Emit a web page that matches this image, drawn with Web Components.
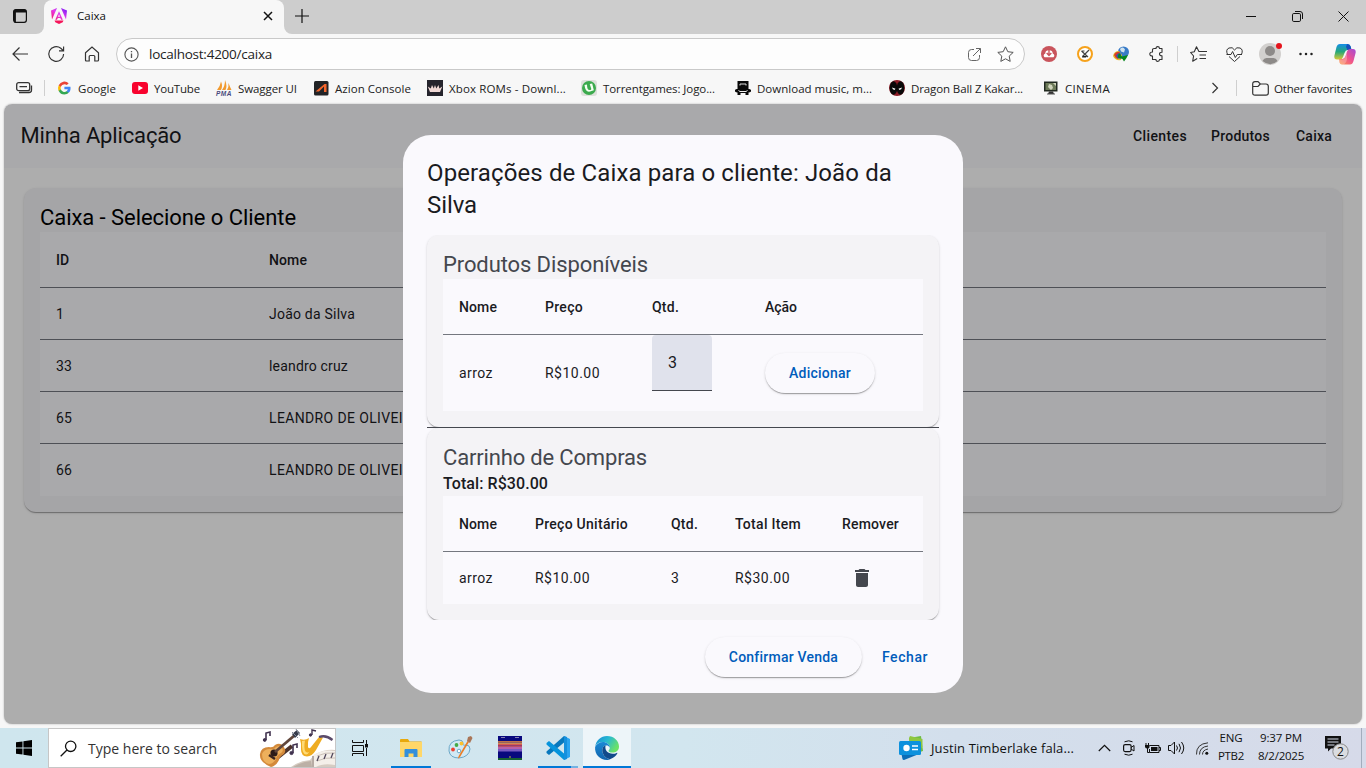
<!DOCTYPE html>
<html lang="pt-BR">
<head>
<meta charset="utf-8">
<title>Caixa</title>
<style>
html,body{margin:0;height:100%;overflow:hidden;background:#f7f7f7}
body{display:flex;flex-direction:column;font-family:"Open Sans","Noto Sans",sans-serif}
</style>
</head>
<body>
<tab-strip></tab-strip>
<address-bar></address-bar>
<favorites-bar></favorites-bar>
<app-page></app-page>
<task-bar></task-bar>
<script>
const ICONS = {
  workspaces:[16,16,`<rect x="1.600" y="1.600" width="12.800" height="12.800" rx="2.300" fill="none" stroke="#111" stroke-width="1.200"/><path d="M1.500 4.600V3.500q0-2 2-2h9q2 0 2 2v1.100zM2 4.600h1.900V14H2z" fill="#111"/>`],
  angular:[16,16,`<defs><linearGradient id="a" x1="0" y1="1" x2="1" y2="0"><stop offset="0" stop-color="#f6125f"/><stop offset=".5" stop-color="#e53cf0"/><stop offset="1" stop-color="#6a18f5"/></linearGradient></defs><path d="M6 0 0 2.500l1 9zM10 0l6 2.500-1 9zM8 3.300 4.300 11.700H6l.8-1.700h2.500l.8 1.700h1.700zM8 6.300l1 2.400H7z" fill="url(#a)" fill-rule="evenodd"/><path d="M3.500 12.600h9l-.8 1.600L8 16l-3.700-1.800z" fill="#f5155a"/>`],
  x:[10,10,`<path d="M1 1l8 8M9 1 1 9" stroke="#111" stroke-width="1.500"/>`],
  plus:[14,14,`<path d="M7 0v14M0 7h14" stroke="#111" stroke-width="1.200"/>`],
  min:[10,10,`<path d="M0 5.500h10" stroke="#111"/>`],
  restore:[11,11,`<rect x=".5" y="2.500" width="8" height="8" rx="1.300" fill="none" stroke="#111"/><path d="M3 .5h5q2.500 0 2.500 2.500v5" fill="none" stroke="#111"/>`],
  close:[11,11,`<path d="M.5.5l10 10M10.500.5l-10 10" stroke="#111"/>`],
  back:[16,14,`<path d="M16 7H1M7.500.5 1 7l6.500 6.500" fill="none" stroke="#333" stroke-width="1.200"/>`],
  reload:[17,16,`<path d="M15.600 8A7.400 7.300 0 1 1 12.800 2.300L15.500 4.700M15.600.5v4.400h-4.600" fill="none" stroke="#333" stroke-width="1.150"/>`],
  home:[16,16,`<path d="M1.500 6.800 8 1l6.500 5.800V14q0 1-1 1h-2.700V10.500q0-1-1-1H6.200q-1 0-1 1V15H2.500q-1 0-1-1z" fill="none" stroke="#333" stroke-width="1.200"/>`],
  info:[15,15,`<circle cx="7.500" cy="7.500" r="6.600" fill="none" stroke="#555" stroke-width="1.100"/><path d="M7.500 6.500V11M7.500 4v1.200" stroke="#555" stroke-width="1.300"/>`],
  open:[13,13,`<path d="M6 1.500H3.500q-3 0-3 3v5q0 3 3 3h5q3 0 3-3V7M8 .5h4.500V5M12.300.7 5 8" fill="none" stroke="#666"/>`],
  star:[17,16,`<path d="M8.500.8l2.300 4.900 5.400.7-4 3.700 1 5.300-4.700-2.600-4.700 2.600 1-5.300-4-3.700 5.400-.7z" fill="none" stroke="#555" stroke-linejoin="round"/>`],
  dl:[16,16,`<circle cx="8" cy="8" r="8" fill="#c9545c"/><path d="M3.500 11.300q-2-2 .8-3.700 0-3.300 3.700-3.300t3.700 3.300q2.800 1.700.8 3.700z" fill="#fff"/><path d="M8 3v6M5.700 7 8 9.500 10.300 7" fill="none" stroke="#c9545c" stroke-width="1.400"/>`],
  clock:[16,16,`<circle cx="8" cy="8" r="7" fill="#fff" stroke="#f6a21c" stroke-width="2"/><path d="M4.500 5h3M4.500 5l6.500 6M12 4 5.500 10.500" fill="none" stroke="#444" stroke-width="1.200"/><path d="M5.500 10h4.500l-1 1.500H5z" fill="#222"/>`],
  idm:[17,16,`<circle cx="10.500" cy="6" r="5.500" fill="#397bc7"/><path d="M7 3q3-3 5 .5l-1 3-3-1z" fill="#cfe2ee"/><path d="M0 10q1-5 6-5l3 4-1 5q-6 1-8-4z" fill="#e2bc2c"/><path d="M1 9q2-4 6-3l-2 7q-3-1-4-4z" fill="#d83a2c"/><path d="M3 9.500q2-3 5-2v5H5z" fill="#2b57b5"/><path d="M6 7l3 3.500 6-1.500-1.500 3-2.500 3.500-1.500-2.500-5-1.500z" fill="#07861c"/>`],
  puzzle:[16,16,`<path d="M5 2.500h2Q7 .6 8.700.6t1.800 1.900H13v3.700q-2.500 0-2.500 1.800T13 9.800v3.700h-2.500q0 1.900-1.800 1.900T7 13.500H3.500V10Q.8 10 .8 8t2.700-2V3.500q0-1 1.500-1z" fill="none" stroke="#333" stroke-width="1.100" stroke-linejoin="round"/>`],
  favs:[17,16,`<path d="M9 5.700 6.500.8 4.300 5.700.6 6.500l3 3.500-.9 5.200 4.500-2.600" fill="none" stroke="#333" stroke-width="1.100" stroke-linejoin="round"/><path d="M9 5.500h8M9.500 9H16M9.500 12.500H16" stroke="#333" stroke-width="1.100"/>`],
  heart:[17,15,`<path d="M1.500 7.500Q-.6 2.500 3 1t5.500 2Q10.500-.4 14 1t1.500 6.500M3 9.500l5.500 5 5.500-5M.5 7.500H5l1.600-3 2.700 6 2-3H16" fill="none" stroke="#333"/>`],
  avatar:[24,24,`<circle cx="11" cy="12" r="11" fill="#d2d0ce"/><circle cx="11" cy="9" r="5" fill="#8d8a88"/><path d="M3.500 19q1.500-3 4-3h7q2.500 0 4 3-7 6.500-15 0z" fill="#8d8a88"/><circle cx="20" cy="4" r="3" fill="#e5141c"/>`],
  dots:[14,4,`<g fill="#222"><circle cx="1.500" cy="2" r="1.250"/><circle cx="7" cy="2" r="1.250"/><circle cx="12.500" cy="2" r="1.250"/></g>`],
  copilot:[22,21,`<defs><linearGradient id="b" x2="0" y2="1"><stop stop-color="#168ee8"/><stop offset=".5" stop-color="#25a879"/><stop offset="1" stop-color="#d9c934"/></linearGradient><linearGradient id="c" x1="1" x2="0" y2="1"><stop stop-color="#a34bd6"/><stop offset=".5" stop-color="#f0538e"/><stop offset="1" stop-color="#fb9a48"/></linearGradient></defs><path d="M6 0h8q2 0 2.700 2.500L17.500 6h-4Q11.500 6 10.500 9L9 13q-.8 2.500-3 2.500H3Q0 15.500.3 12L2.500 3Q3.400 0 6 0z" fill="url(#b)"/><path d="M13 0q3 0 3.600 2.500L17.500 6h-4L12 3z" fill="#1650bd"/><path d="M16 20.500H8q-2 0-2.500-2L5 15h3.500q2 0 3-3L13 7.500Q13.800 5 16 5h3q3 0 2.700 3.500l-2.200 8.500q-1 3.500-3.500 3.500z" fill="url(#c)"/><path d="M8.500 15.500q2 0 3-3L13 8v7.500q0 2-3 5H8q-2 0-2.500-2L5 15.500z" fill="#fff" opacity=".25"/>`],
  feed:[17,12,`<rect x=".7" y=".7" width="13" height="8" rx="2" fill="none" stroke="#333" stroke-width="1.300"/><path d="M3.500 4.700h7.500M15.500 3.500V8q0 2.500-2.500 2.500H3" fill="none" stroke="#333" stroke-width="1.300"/>`],
  google:[16,16,`<g transform="scale(.8) translate(2.500 2)"><path d="M15.680 8.180c0-.57-.05-1.110-.15-1.640H8v3.100h4.300a3.680 3.680 0 0 1-1.600 2.410v2h2.590c1.510-1.390 2.390-3.440 2.390-5.870z" fill="#4285f4"/><path d="M8 16c2.160 0 3.970-.72 5.290-1.940l-2.590-2a4.800 4.800 0 0 1-7.150-2.520H.88v2.070A8 8 0 0 0 8 16z" fill="#34a853"/><path d="M3.550 9.540a4.800 4.800 0 0 1 0-3.060V4.410H.88a8 8 0 0 0 0 7.200z" fill="#fbbc05"/><path d="M8 3.180c1.170 0 2.230.4 3.060 1.200l2.300-2.300A8 8 0 0 0 .88 4.410l2.670 2.070A4.770 4.770 0 0 1 8 3.180z" fill="#ea4335"/></g>`],
  youtube:[16,16,`<rect x="0" y="2" width="16" height="12" rx="3" fill="#f8032e"/><path d="M6.300 5.300v5.400L11 8z" fill="#fff"/>`],
  pma:[16,16,`<path d="M5 1.500Q7 6 5 10H1Q4 7 5 1.500zM9 0q2.500 6 .5 10H6q3-4 3-10zM12.500 3Q14 7 15.500 10H11q2-3 1.500-7z" fill="#f29a2e"/><text x="0" y="16" font-family="Liberation Sans" font-style="italic" font-weight="bold" font-size="6.500" textLength="15.500" fill="#4a4b7d">PMA</text>`],
  azion:[16,16,`<rect x="1" y="1" width="14.500" height="14.500" rx="1.500" fill="#222326"/><path d="M2.500 11.500 11.500 4H13.500v8H11V6.500l-5 5z" fill="#f3652b"/>`],
  xbox:[16,16,`<path d="M0 0h16v16H0z" fill="#25242c"/><path d="M3 12 .8 6.500l3 2L5 5l1.800 3.500L8 5l1.300 3.500L11.500 5l.8 3.500 3-2L13 12z" fill="#f0d8d5"/>`],
  torrent:[16,16,`<rect width="16" height="16" rx="3" fill="#dde0db"/><circle cx="8" cy="8" r="7" fill="#3baa4d"/><path d="M3.500 5 6 4.500Q6 10 8.500 10T10 8L8.700 4l2.500-.5 1.600 6.800-2.300.7Q4.500 14 3.500 5z" fill="#f5fff2"/>`],
  music:[16,16,`<path d="M2.500 1h11v8h-11zM0 10q1-1.500 3-1h10q2-.5 3 1v1.500q-1 1-2.500 1V15h-3v-2h-5v2h-3v-2.500Q1 12.500 0 11.500z" fill="#080808"/><path d="M5 5.500V4h6v1.500" fill="none" stroke="#ddd"/><path d="M3.500 10.500l1.500 1h6l1.500-1" fill="none" stroke="#eee"/>`],
  dead:[16,16,`<circle cx="8" cy="8" r="8" fill="#8c1c26"/><ellipse cx="4.500" cy="8" rx="3.800" ry="6.700" fill="#090909"/><ellipse cx="11.500" cy="8" rx="3.800" ry="6.700" fill="#090909"/><path d="M3 7.500l3.500 1.200-1 1.200Q3.500 9.800 3 7.500zM13 7.500 9.500 8.700l1 1.200q2-.1 2.500-2.400z" fill="#fff"/>`],
  cinema:[16,16,`<path d="M1 1.500h13.500v10H1z" fill="#222a21"/><path d="M2.500 3h10.500v7H2.500z" fill="#6c7a58"/><path d="M6 4l3 1 1 3-2 2-3-3zM10 3h3v3z" fill="#cfd3bb"/><path d="M6 11.500h4l1 2.500H5z" fill="#333"/><path d="M4 14h8" stroke="#555"/>`],
  chev:[8,12,`<path d="M1.500 1 6.500 6l-5 5" fill="none" stroke="#333" stroke-width="1.200"/>`],
  folder:[17,15,`<path d="M.7 4V3q0-2.300 2.300-2.300h3L8.300 3H14q2.300 0 2.300 2.300V12q0 2.200-2.300 2.200H3Q.7 14.200.7 12zM.7 5.500H6L8.300 3" fill="none" stroke="#333" stroke-width="1.200"/>`],
  trash:[24,24,`<path d="M6 19c0 1.100.9 2 2 2h8c1.100 0 2-.9 2-2V7H6v12zM19 4h-3.500l-1-1h-5l-1 1H5v2h14V4z" fill="#44474e"/>`],
  win:[16,16,`<path d="M0 2.300 6.500 1.400V7.500H0zM7.400 1.300 16 0v7.500H7.400zM0 8.500h6.500v6.100L0 13.700zM7.400 8.500H16V16l-8.600-1.300z" fill="#000"/>`],
  lens:[17,17,`<circle cx="10.700" cy="6.300" r="5.200" fill="none" stroke="#111" stroke-width="1.300"/><path d="M7 10 .7 16.300" stroke="#111" stroke-width="1.300"/>`],
  taskview:[17,16,`<path d="M.5 0v2.500h11V0M.5 16v-2.500h11V16M.5 5.500h11v6H.5zM14.500 0v4M14.500 8v8" fill="none" stroke="#111"/><path d="M13 4h3v3.500h-3z" fill="#111"/>`],
  explorer:[22,19,`<path d="M0 1q0-1 1-1h7l1.500 2.500H21q1 0 1 1V18H0z" fill="#e8a90c"/><path d="M0 3h22v15H0z" fill="#ffd768"/><path d="M4.500 18V11q0-1 1-1h11q1 0 1 1v7h-4v-3.500h-5V18z" fill="#3490dc"/>`],
  paint:[25,24,`<path d="M11 4Q0 5 1 15q1 7 10 7 10-1 11-9 0-4-4-4-4 1-3-2 0-3-4-3z" fill="#d1e9f4" stroke="#6ca8c8"/><circle cx="5" cy="13.500" r="1.900" fill="#ee4030"/><circle cx="8.500" cy="9" r="1.900" fill="#44aa49"/><circle cx="13.500" cy="7.500" r="1.900" fill="#fbc02d"/><circle cx="11" cy="15" r="1.800" fill="#fff" stroke="#6ca8c8"/><path d="M21 6 12 21q-1.500 2-2 1l.7-2L19.500 5z" fill="#ea7e27"/><path d="M19 5l1-4 3-1 1.500 2L22 7z" fill="#aa7657"/>`],
  atari:[24,24,`<path d="M0 0h24v24H0z" fill="#08087d"/><path d="M3 1.500h4M17 1.500h4" stroke="#8780b2"/><path d="M0 5h24v1.500H0z" fill="#c07046"/><path d="M0 6.500h24V8H0z" fill="#c98a5a"/><path d="M0 8h24v1.500H0z" fill="#d95950"/><path d="M0 9.500h24V11H0z" fill="#bd4d69"/><path d="M0 11h24v2H0z" fill="#b761aa"/><path d="M0 13h24v2.500H0z" fill="#785ac0"/><path d="M0 22h24v2H0z" fill="#175f32"/><path d="M12 20v2" stroke="#c0b040"/>`],
  vscode:[24,24,`<path d="M18 0l6 3v18l-6 3z" fill="#2aa4f0"/><path d="M18 0v6.500L3 19l-2.500-2v-1.500z" fill="#0878bd"/><path d="M18 24v-6.500L3 5 .5 7v1.500z" fill="#0794dc"/><path d="M18 0v24l3-1V1z" fill="#1690dd"/>`],
  edge:[24,24,`<defs><linearGradient id="d" x2="1" y2=".5"><stop stop-color="#1686d5"/><stop offset=".5" stop-color="#27b9d2"/><stop offset="1" stop-color="#6be267"/></linearGradient><linearGradient id="e" x2="0" y2="1"><stop stop-color="#1b89d5"/><stop offset="1" stop-color="#1264ad"/></linearGradient></defs><path d="M.2 11C1 4 6 0 12 0c7 0 12 5 12 10.500 0 4-3 6-6.500 6-3 0-4-1-4-1.800 0-.7 1.300-1 1.300-3C14.800 8.500 11.500 6 8 6 4 6 1 8 .2 11z" fill="url(#d)"/><path d="M.1 11C1.300 8 4.500 6 8 6c3.500 0 6.800 2.500 6.800 5.700-1-2-2.500-2.500-4-2.200C7.500 10 6.500 14 8 17.500c1 3 4 5.500 7.500 5.500-1 .6-2.500 1-3.500 1C5 24-.5 18.500.1 11z" fill="url(#e)"/><path d="M10.800 9.500C7.500 10 6.500 14 8 17.500c1 3 4 5.500 7.500 5.500 3-1 5.500-3 6.800-5.500.3-.6-.2-.8-.6-.6-3.500 1.600-8 .8-10-1.700-1.500-2-1.700-4.500-.9-5.700z" fill="#114a8b"/>`],
  news:[24,24,`<path d="M10 2 22 0l2 15-12 4z" fill="#6cbd45"/><path d="M10 2 11 0l12.500 3v8L12 19z" fill="#8fc740"/><path d="M2 16l18 2-15 6q-1.500 0-1.500-1z" fill="#0c6db7"/><rect x="0" y="5" width="22" height="14" rx="1.500" fill="#0d91dd"/><circle cx="7.500" cy="12" r="3.200" fill="#fff"/><path d="M13 10H19M13 13.500H19" stroke="#fff" stroke-width="1.600"/>`],
  up:[13,8,`<path d="M.8 7 6.500 1.300 12.200 7" fill="none" stroke="#111" stroke-width="1.200"/>`],
  cam:[12,16,`<path d="M1.500 1.800q4.500-2 8 0M1.500 14.200q4.500 2 8 0" fill="none" stroke="#111"/><rect x=".6" y="4.600" width="7.500" height="7" rx="1.500" fill="none" stroke="#111" stroke-width="1.200"/><path d="M8 7.500 11 5.500v5.500L8 9" fill="none" stroke="#111"/>`],
  bat:[16,13,`<path d="M4.500 3.500h9.500V10.500H4.500V7M14 5.500H15.500V8.500h-1.500" fill="none" stroke="#111"/><path d="M6 5h6.500v4H6zM0 3h4.500v2q0 1.500-2 1.500T0 5z" fill="#111"/><path d="M1 1v2M3.500 1v2M2.500 6v4.500h2" fill="none" stroke="#111"/>`],
  vol:[17,14,`<path d="M.5 4.500H3L6.500 1v12L3 9.500H.5z" fill="none" stroke="#111"/><path d="M8.500 4.500q2 2.500 0 5M11 2.800q3 4.200 0 8.400M13.500 1q4.500 6 0 12" fill="none" stroke="#111"/>`],
  wifi:[13,13,`<path d="M.5 12.500Q0 2 12 .8M3.500 12.500Q3.500 5 12 4M6.500 12.500Q6.500 8 12 7" fill="none" stroke="#333"/><circle cx="10.800" cy="11.300" r="1.500" fill="#111"/>`],
  notif:[24,24,`<path d="M0 0h16v12.500H6L3 15.500v-3H0z" fill="#111"/><path d="M2.500 3h11M2.500 6h11M2.500 9h7" stroke="#d5dcea" stroke-width="1.200"/><circle cx="15.500" cy="15.500" r="7.700" fill="#dadce0" stroke="#888"/><text x="15.500" y="20" text-anchor="middle" font-family="Open Sans" font-size="12" fill="#111">2</text>`],
  band:[76,38,`<path d="M33 17 18 29" stroke="#4c332b" stroke-width="4"/><path d="M1 25Q2 18 10 18q4 1 6-2 5-3 8 1 4 4 1 8-5 3-5 6-3 6-8 7Q0 33 1 25z" fill="#d38a3b"/><path d="M3 25Q5 20 11 20q4 1 6-2 3-2 6 1 2 3-1 5-5 3-5 6-3 5-7 5-7-2-7-10z" fill="#edb05c"/><circle cx="15" cy="24" r="3.600" fill="#2c1c18"/><path d="M10 26l6 4" stroke="#34211c" stroke-width="2.500"/><path d="M16 23 36 6" stroke="#60463b" stroke-width="2.800"/><path d="M33 5l5-4 3 3-5 5z" fill="#353a4a"/><path d="M33 3l6 6M37 0l4 7" stroke="#848c9a"/><g fill="#40324f" stroke="#40324f"><path d="M7 11V4l4-1v4" fill="none" stroke-width="1.600"/><circle cx="5.700" cy="11" r="1.400"/><path d="M34 24v-8l4-1v4" fill="none" stroke-width="1.600"/><circle cx="32.500" cy="24" r="1.600"/><path d="M53 6V1l4 1" fill="none" stroke-width="1.400"/><circle cx="51.500" cy="6" r="1.200"/></g><path d="M41 10q5 2 9-1-1.500 4-1 9 1 2.500 3 0L60 8l4 .5L57 21q-4 6.500-9 6.500-6-.5-6-7 .5-6-1-10.500z" fill="#efac22"/><path d="M43 12l3-.5q-1.500 8 .5 11 2 2 4 0-2 4-5 2.500-3-2-2.500-13z" fill="#ffdb75"/><path d="M60 8q7-2.500 13.500 3" fill="none" stroke="#5a4a6a" stroke-width="2.300"/><path d="M32 38q8-6 19-7l4-5q10-6 21-5v17z" fill="#d6ccc2"/><path d="M53 38V27q10-7 23-5v14q-12-2-19 2z" fill="#f4efe9"/><path d="M34 38q8-5 18-6l1 6z" fill="#bcb0a6"/><path d="M54 27v11" stroke="#7a6960"/><path d="M58 27q8-4 18-3M58 32q8-4 18-3" fill="none" stroke="#b8aaa0" stroke-width=".7"/><path d="M58 32l2-5M65 30l2-5M72 29l2-5" stroke="#52485c" stroke-width="1.300"/>`]
};
class Base extends HTMLElement{
  connectedCallback(){
    if(this.shadowRoot) return;
    this.attachShadow({mode:'open'}).innerHTML='<style>*,:host{box-sizing:border-box}'+this.css()+'</style>'+this.html();
  }
  css(){return ':host{display:block}'} html(){return '<slot></slot>'}
}
const def=(n,css,html)=>customElements.define(n,class extends Base{css(){return typeof css=='function'?css(this):css} html(){return typeof html=='function'?html(this):html}});

def('x-icon',e=>{const i=ICONS[e.getAttribute('n')];return `:host{display:inline-block;flex:none;width:${i[0]}px;height:${i[1]}px}svg{display:block;overflow:visible}`},
  e=>{const i=ICONS[e.getAttribute('n')];return `<svg width="${i[0]}" height="${i[1]}" viewBox="0 0 ${i[0]} ${i[1]}">${i[2]}</svg>`});

/* Text that tracks itself out to the width given in "w". */
customElements.define('fit-text',class extends Base{
  css(){return ':host{display:inline-block;flex:none;width:max-content;white-space:pre}'}
  connectedCallback(){
    super.connectedCallback();
    const w=+this.getAttribute('w'),n=this.textContent.length;
    if(w) this.style.letterSpacing=((w-this.getBoundingClientRect().width)/n)+'px';
  }
});

/* Centred slot of a fixed width, used along every bar. */
def('bar-cell',e=>`:host{display:flex;flex:none;align-items:center;justify-content:center;width:${e.getAttribute('w')}px}`,'<slot></slot>');

def('tab-strip',`:host{display:flex;flex:none;height:34px;background:#cdcdcd}
.left{background:#cdcdcd;border-radius:0 0 8px 0}
.wrapl,.wrapr{background:#f7f7f7;display:flex}.wrapr{flex:1}
.right{flex:1;display:flex;background:#cdcdcd;border-radius:0 0 0 8px}
.tab{width:240px;display:flex;align-items:center;background:#f7f7f7;border-radius:8px 8px 0 0;padding:0 11px 2px 7px;font-size:11.500px;color:#111}
.tab fit-text{margin-left:10px;margin-top:-2px}.sp{flex:1}.left,.right{padding-bottom:2px}`,
`<div class="wrapl"><bar-cell class="left" w="44" style="padding-right:4px"><x-icon n="workspaces"></x-icon></bar-cell></div>
<div class="tab"><x-icon n="angular"></x-icon><fit-text w="29">Caixa</fit-text><span class="sp"></span><x-icon n="x"></x-icon></div>
<div class="wrapr"><div class="right"><bar-cell w="35"><x-icon n="plus"></x-icon></bar-cell><span class="sp"></span><bar-cell w="46"><x-icon n="min"></x-icon></bar-cell><bar-cell w="46"><x-icon n="restore"></x-icon></bar-cell><bar-cell w="46"><x-icon n="close"></x-icon></bar-cell></div></div>`);

def('address-bar',`:host{display:flex;flex:none;align-items:center;height:40px;padding-left:2px;background:#f7f7f7}
.url{display:flex;align-items:center;width:909px;height:32px;margin-left:6px;border:1px solid #c9c9c9;border-radius:16px;background:#fdfdfd;padding:0 10px 0 7px;font-size:13.500px;color:#222}
.url fit-text{margin:0 auto 0 10px}.url x-icon+x-icon{margin-left:16px}
i{width:1px;height:16px;background:#cfcfcf;margin:0 2px}`,
`<bar-cell w="36"><x-icon n="back"></x-icon></bar-cell><bar-cell w="36"><x-icon n="reload"></x-icon></bar-cell><bar-cell w="36"><x-icon n="home"></x-icon></bar-cell>
<div class="url"><x-icon n="info"></x-icon><fit-text w="123">localhost:4200/caixa</fit-text><x-icon n="open"></x-icon><x-icon n="star"></x-icon></div>
<bar-cell w="48"><x-icon n="dl"></x-icon></bar-cell><bar-cell w="24"><x-icon n="clock"></x-icon></bar-cell><bar-cell w="48"><x-icon n="idm"></x-icon></bar-cell><bar-cell w="24"><x-icon n="puzzle"></x-icon></bar-cell>
<bar-cell w="16"><i></i></bar-cell><bar-cell w="26"><x-icon n="favs"></x-icon></bar-cell><bar-cell w="46"><x-icon n="heart"></x-icon></bar-cell><bar-cell w="28"><x-icon n="avatar"></x-icon></bar-cell><bar-cell w="42"><x-icon n="dots"></x-icon></bar-cell><bar-cell w="35"><x-icon n="copilot"></x-icon></bar-cell>`);

def('fav-item',e=>`:host{display:flex;flex:none;align-items:center;width:${e.getAttribute('w')}px}fit-text{margin-left:6px}`,
 e=>`<x-icon n="${e.getAttribute('n')}"></x-icon><fit-text w="${e.getAttribute('t')}">${e.textContent}</fit-text>`);
def('favorites-bar',`:host{display:flex;flex:none;align-items:center;height:30px;padding:0 0 2px 16px;font-size:11.500px;color:#222;background:#f7f7f7}
i{width:1px;height:16px;background:#cfcfcf;margin:0 11px}.sp{flex:1}.o{display:flex;align-items:center;gap:5px;margin-right:14px}`,
`<x-icon n="feed"></x-icon><i></i><fav-item n="google" w="76" t="38">Google</fav-item><fav-item n="youtube" w="84" t="46">YouTube</fav-item><fav-item n="pma" w="97" t="59">Swagger UI</fav-item><fav-item n="azion" w="114" t="76">Azion Console</fav-item><fav-item n="xbox" w="154" t="117">Xbox ROMs - Downl...</fav-item><fav-item n="torrent" w="154" t="112">Torrentgames: Jogo...</fav-item><fav-item n="music" w="154" t="115">Download music, m...</fav-item><fav-item n="dead" w="154" t="112">Dragon Ball Z Kakar...</fav-item><fav-item n="cinema" w="70" t="45">CINEMA</fav-item><span class="sp"></span><x-icon n="chev"></x-icon><i style="margin:0 15px 0 17px"></i><div class="o"><x-icon n="folder"></x-icon><fit-text w="78">Other favorites</fit-text></div>`);

/* Material card */
def('m-card',`:host{display:block;background:#f4f3f6;border-radius:12px;padding:16px;box-shadow:0 2px 1px -1px rgba(0,0,0,.2),0 1px 1px rgba(0,0,0,.14),0 1px 3px rgba(0,0,0,.12)}
.t{font-size:22px;line-height:28px}`,`<div class="t"><slot name="title"></slot></div><slot></slot>`);
/* Table grid: "cols" is its column template, rows are slotted. */
def('m-row',e=>`:host{display:grid;grid-template-columns:${e.getAttribute('cols')};align-items:center;height:${e.getAttribute('h')||52}px;font-size:14px;color:#1a1b1f;border-bottom:1px solid ${e.hasAttribute('last')?'transparent':'#74777f'};font-weight:${e.hasAttribute('head')?500:400}}
::slotted(*){margin-left:16px;justify-self:start}`,'<slot></slot>');
def('m-table',`:host{display:block;background:#faf9fd}`,'<slot></slot>');
def('m-button',e=>`:host{display:flex;flex:none;align-items:center;justify-content:center;height:40px;border-radius:20px;color:#005cbb;font-size:14px;font-weight:500;width:${e.getAttribute('w')}px;${e.hasAttribute('raised')?'background:#faf9fd;box-shadow:0 2px 1px -1px rgba(0,0,0,.2),0 1px 1px rgba(0,0,0,.14),0 1px 3px rgba(0,0,0,.12)':''}}`,'<slot></slot>');
def('qty-field',`:host{display:flex;align-items:center;align-self:start;width:60px;height:56px;padding:0 0 1px 16px;border-radius:4px 4px 0 0;background:#e0e2ec;border-bottom:1px solid #44474e;font-size:16px}`,'<slot></slot>');

def('app-nav',`:host{display:flex;align-items:center;height:64px;padding:0 30px 0 16.500px;background:#faf9fd;color:#1a1b1f;font-size:22px}
:host>fit-text{margin-top:-2px}
nav{margin-left:auto;display:flex;gap:24px;font-size:14px;font-weight:500}nav :last-child{margin-left:2px}`,
`<fit-text w="161" style="margin-top:-2px">Minha Aplicação</fit-text><nav><fit-text w="54">Clientes</fit-text><fit-text w="59">Produtos</fit-text><fit-text w="36">Caixa</fit-text></nav>`);

def('caixa-dialog',`:host{display:flex;flex-direction:column;position:absolute;left:399px;top:31px;width:560px;height:558px;border-radius:28px;background:#faf9fd;color:#1a1b1f;padding:22px 24px 16px}
h2{margin:0 0 14px;font-size:24px;line-height:32px;font-weight:400;display:flex;flex-direction:column}
.body{height:385px;margin:0 -4px;padding:0 4px;width:520px;overflow:hidden}
hr{margin:0;border:0;height:1px;background:#44474e;position:relative}
fit-text[slot=title]{color:#44474e}
.total{font-size:16px;line-height:24px;font-weight:500;display:block}
.acts{display:flex;gap:8px;justify-content:flex-end;margin-top:auto;margin-right:-1px}`,
`<h2><fit-text w="465">Operações de Caixa para o cliente: João da</fit-text><fit-text w="50">Silva</fit-text></h2>
<div class="body"><m-card><fit-text slot="title" w="205">Produtos Disponíveis</fit-text>
<m-table><m-row head h="56" cols="86px 107px 113px 174px"><fit-text w="38">Nome</fit-text><fit-text w="38">Preço</fit-text><fit-text w="27">Qtd.</fit-text><fit-text w="32">Ação</fit-text></m-row>
<m-row last h="76" cols="86px 107px 113px 174px"><fit-text w="34">arroz</fit-text><fit-text w="55">R$10.00</fit-text><qty-field>3</qty-field><m-button raised w="110"><fit-text w="62">Adicionar</fit-text></m-button></m-row></m-table></m-card>
<hr><m-card><fit-text slot="title" w="204">Carrinho de Compras</fit-text><div class="total"><fit-text w="105">Total: R$30.00</fit-text></div>
<m-table><m-row head h="56" cols="76px 136px 64px 107px 97px"><fit-text w="38">Nome</fit-text><fit-text w="93">Preço Unitário</fit-text><fit-text w="27">Qtd.</fit-text><fit-text w="66">Total Item</fit-text><fit-text w="57">Remover</fit-text></m-row>
<m-row last cols="76px 136px 64px 107px 97px"><fit-text w="34">arroz</fit-text><fit-text w="55">R$10.00</fit-text><fit-text>3</fit-text><fit-text w="55">R$30.00</fit-text><x-icon n="trash" style="margin-left:24px"></x-icon></m-row></m-table></m-card></div>
<div class="acts"><m-button raised w="157"><fit-text w="109">Confirmar Venda</fit-text></m-button><m-button w="70"><fit-text w="46">Fechar</fit-text></m-button></div>`);

const C='213px 1fr';
def('app-page',`:host{display:block;position:relative;flex:none;height:620px;width:1358px;margin:0 4px 4px;border-radius:8px;overflow:hidden;background:#fff;font-family:Roboto,sans-serif;box-shadow:0 0 2px rgba(0,0,0,.3)}
.main{padding:20px}.scrim{position:absolute;inset:0;background:rgba(0,0,0,.32)}fit-text[slot=title]{color:#000}`,
`<app-nav></app-nav><div class="main"><m-card><fit-text slot="title" w="256">Caixa - Selecione o Cliente</fit-text><m-table>
<m-row head h="56" cols="${C}"><fit-text>ID</fit-text><fit-text w="38">Nome</fit-text></m-row>
<m-row cols="${C}"><fit-text>1</fit-text><fit-text w="86">João da Silva</fit-text></m-row>
<m-row cols="${C}"><fit-text w="16">33</fit-text><fit-text w="79">leandro cruz</fit-text></m-row>
<m-row cols="${C}"><fit-text w="16">65</fit-text><fit-text w="134">LEANDRO DE OLIVEI</fit-text></m-row>
<m-row last cols="${C}"><fit-text w="16">66</fit-text><fit-text w="134">LEANDRO DE OLIVEI</fit-text></m-row></m-table></m-card></div>
<div class="scrim"></div><caixa-dialog></caixa-dialog>`);

def('task-bar',`:host{display:flex;flex:none;height:40px;background:linear-gradient(90deg,#cfe6ee 0,#d2e6ef 50%,#d3dfec 70%,#d6dae9 100%);color:#111}
.search{display:flex;align-items:center;width:288px;background:#fff;border:1px solid #c6c6c6;padding-left:11px;font-size:14px;overflow:hidden;color:#333}
.search fit-text{margin:0 auto 0 11px}.search x-icon:last-child{align-self:flex-end}
.run{border-bottom:2px solid #0078d7;margin:0 5px 0 4px;padding-top:2px}
.act{background:#edf5f9;border-bottom:2px solid #0078d7;padding-top:2px}
.two{border-image:linear-gradient(90deg,#0078d7 32px,#74b2e2 32px) 2}
.sp{flex:1}.n{font-size:13px;align-self:center;margin:0 19px 0 8px}
.st{display:flex;flex-direction:column;align-items:center;justify-content:center;font-size:11.500px;line-height:18px;padding-bottom:2px;flex:none}
.end{border-left:1px solid #a3adbd;width:5px}`,
`<bar-cell w="48"><x-icon n="win"></x-icon></bar-cell><div class="search"><x-icon n="lens"></x-icon><fit-text w="129">Type here to search</fit-text><x-icon n="band"></x-icon></div>
<bar-cell w="51" style="padding-right:2px"><x-icon n="taskview"></x-icon></bar-cell><bar-cell class="run" w="40"><x-icon n="explorer"></x-icon></bar-cell><bar-cell w="49"><x-icon n="paint"></x-icon></bar-cell><bar-cell w="49"><x-icon n="atari"></x-icon></bar-cell><bar-cell class="run two" w="40"><x-icon n="vscode"></x-icon></bar-cell><bar-cell class="act" w="48"><x-icon n="edge"></x-icon></bar-cell>
<span class="sp"></span><x-icon n="news" style="align-self:center"></x-icon><fit-text class="n" w="143">Justin Timberlake fala...</fit-text>
<bar-cell w="22"><x-icon n="up"></x-icon></bar-cell><bar-cell w="27"><x-icon n="cam"></x-icon></bar-cell><bar-cell w="21"><x-icon n="bat"></x-icon></bar-cell><bar-cell w="27"><x-icon n="vol"></x-icon></bar-cell><bar-cell w="24"><x-icon n="wifi"></x-icon></bar-cell>
<div class="st" style="width:34px"><fit-text w="23">ENG</fit-text><fit-text w="26">PTB2</fit-text></div><div class="st" style="width:66px"><fit-text w="42">9:37 PM</fit-text><fit-text w="46">8/2/2025</fit-text></div>
<bar-cell w="47" style="padding-right:2px"><x-icon n="notif"></x-icon></bar-cell><div class="end"></div>`);
</script>
</body>
</html>
